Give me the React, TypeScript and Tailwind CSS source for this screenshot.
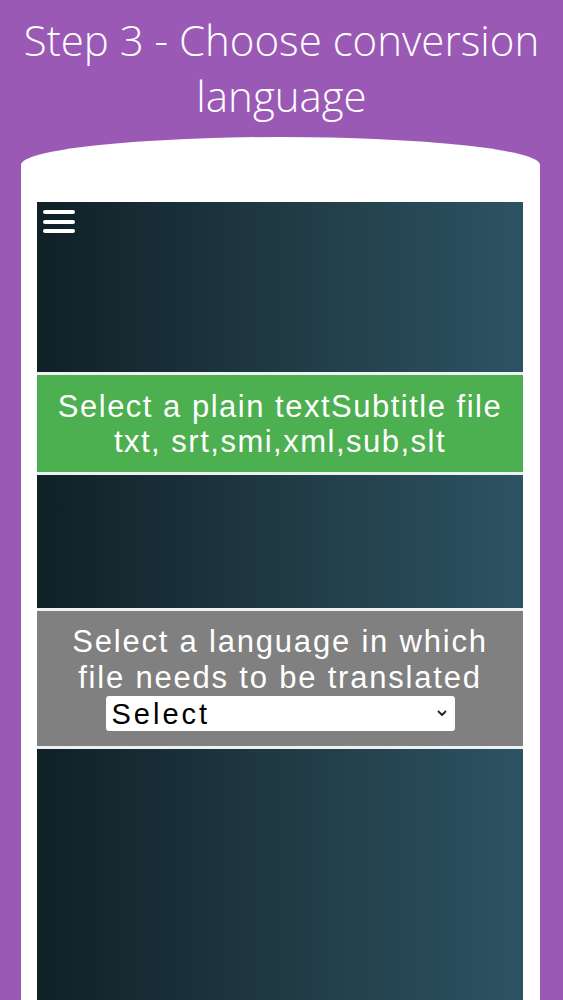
import React from 'react';

const darkBand = 'bg-[linear-gradient(to_right,#0f2027,#203a43,#2c5364)]';

export default function App() {
  return (
    <div className="min-h-[1000px] h-[1000px] overflow-hidden bg-[#9b59b6] flex flex-col">
      <h1 className="pt-[12px] text-center text-white text-[42px] leading-[56px] font-light font-['Open_Sans',sans-serif]">
        Step 3 - Choose conversion language
      </h1>

      {/* phone frame */}
      <div className="mt-[13px] ml-[21px] mr-[23px] flex-1 bg-white rounded-t-[50%_28px] pt-[65px] pl-[16px] pr-[17px]">
        <div className="flex flex-col gap-[3px] h-full bg-[#eef1f2] font-['Liberation_Sans',Arial,sans-serif] text-white">
          <div className={`h-[170px] shrink-0 ${darkBand} pt-[8px] pl-[6px]`}>
            <div className="flex flex-col gap-[5.5px] w-[32px]">
              <span className="h-[4px] rounded-full bg-white" />
              <span className="h-[4px] rounded-full bg-white" />
              <span className="h-[4px] rounded-full bg-white" />
            </div>
          </div>

          <div className="h-[97px] shrink-0 bg-[#4caf50] flex flex-col items-center justify-center text-[31px] leading-[35px] tracking-[1.5px]">
            <p>Select a plain textSubtitle file</p>
            <p>txt, srt,smi,xml,sub,slt</p>
          </div>

          <div className={`h-[133px] shrink-0 ${darkBand}`} />

          <div className="h-[135px] shrink-0 bg-[#808080] flex flex-col items-center pt-[13px] text-[31px] leading-[36px] tracking-[1.8px]">
            <p>Select a language in which</p>
            <p>file needs to be translated</p>
            <div className="relative w-[349px] h-[35px] bg-white rounded-[3px]">
              <select className="appearance-none w-full h-full bg-transparent pl-[6px] text-black text-[29px] leading-[35px] tracking-[3px] outline-none">
                <option>Select</option>
              </select>
              <svg className="absolute right-[8px] top-[14px] pointer-events-none" width="10" height="7" viewBox="0 0 10 7">
                <path d="M1.5 1.5 L5 5 L8.5 1.5" fill="none" stroke="#222" strokeWidth="1.8" strokeLinecap="round" strokeLinejoin="round" />
              </svg>
            </div>
          </div>

          <div className={`flex-1 ${darkBand}`} />
        </div>
      </div>
    </div>
  );
}
